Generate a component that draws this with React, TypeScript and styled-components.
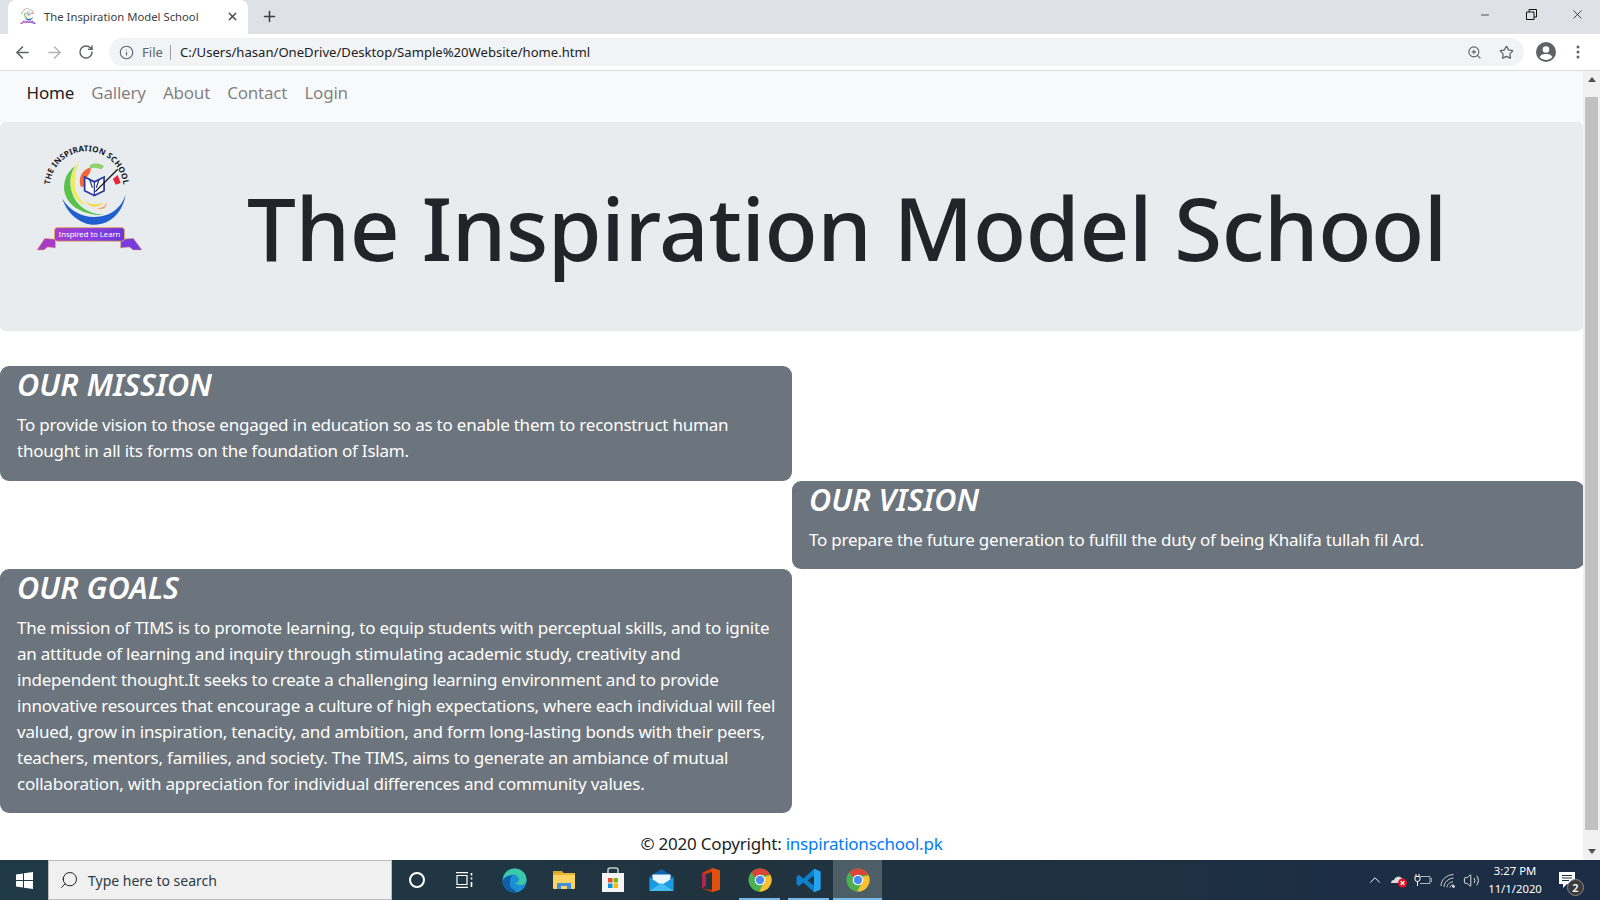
import React from 'react';
import styled, { createGlobalStyle } from 'styled-components';
import { ArrowLeft, ArrowRight, RotateCw, Star, ZoomIn, Info, Plus, X, Minus, Search, ChevronUp, Volume2 } from 'lucide-react';

const GlobalStyle = createGlobalStyle`
  html, body {
    margin: 0;
    height: 100%;
    overflow: hidden;
    background: #fff;
  }
  * { box-sizing: border-box; }
`;

const Screen = styled.div`
  width: 1600px;
  height: 900px;
  display: flex;
  flex-direction: column;
  overflow: hidden;
  font-family: "Noto Sans", "Open Sans", sans-serif;
  color: #212529;
`;

/* browser chrome */
const TabStrip = styled.div`
  height: 34px;
  background: #dee1e6;
  display: flex;
  align-items: flex-end;
  padding-left: 8px;
  flex: none;
`;

const Tab = styled.div`
  width: 240px;
  height: 34px;
  background: #fff;
  border-radius: 8px 8px 0 0;
  display: flex;
  align-items: center;
  padding: 0 9px 2px 12px;
  font-size: 11.3px;
  color: #3c4043;
`;

const TabTitle = styled.span`
  flex: 1;
  margin-left: 8px;
  white-space: nowrap;
`;

const NewTab = styled.div`
  width: 34px;
  height: 34px;
  margin-left: 4px;
  padding-bottom: 2px;
  display: flex;
  align-items: center;
  justify-content: center;
  color: #3c4043;
`;

const WindowControls = styled.div`
  margin-left: auto;
  display: flex;
  height: 34px;
  align-items: flex-start;
  color: #111;
`;

const WindowButton = styled.div`
  width: 46px;
  height: 29px;
  display: flex;
  align-items: center;
  justify-content: center;
`;

const Toolbar = styled.div`
  height: 37px;
  background: #fff;
  border-bottom: 1px solid #dadce0;
  display: flex;
  align-items: center;
  padding-left: 6px;
  flex: none;
`;

const NavIcon = styled.div<{ $dim?: boolean }>`
  width: 32px;
  height: 28px;
  display: flex;
  align-items: center;
  justify-content: center;
  color: ${p => (p.$dim ? '#b4b6b9' : '#5f6368')};
`;

const Omnibox = styled.div`
  width: 1415px;
  height: 28px;
  margin-left: 7px;
  border-radius: 14px;
  background: #f1f3f4;
  display: flex;
  align-items: center;
  padding: 0 2px 0 10px;
  font-size: 13.1px;
  color: #202124;
`;

const FileChip = styled.span`
  color: #5f6368;
  margin-left: 8px;
  padding-right: 7px;
  border-right: 1px solid #9aa0a6;
  line-height: 15px;
`;

const UrlText = styled.span`
  margin-left: 9px;
  flex: 1;
  white-space: nowrap;
`;

const OmniIcon = styled.div`
  width: 32px;
  display: flex;
  justify-content: center;
  color: #5f6368;
`;

const ToolRight = styled.div`
  display: flex;
  align-items: center;
  margin-left: 6px;
  color: #5f6368;
`;

const ToolIconSlot = styled.div<{ $w: number }>`
  width: ${p => p.$w}px;
  display: flex;
  justify-content: center;
`;

/* page */
const Viewport = styled.div`
  flex: 1;
  min-height: 0;
  display: flex;
`;

const Page = styled.div`
  flex: 1;
  min-width: 0;
  overflow: hidden;
  font-size: 17px;
  letter-spacing: -0.22px;
  line-height: 26px;
`;

const Navbar = styled.nav`
  height: 51px;
  background: #f8f9fa;
  display: flex;
  align-items: center;
  padding: 0 0 7px 18px;
`;

const NavLink = styled.a<{ $active?: boolean }>`
  padding: 0 8.6px;
  color: ${p => (p.$active ? 'rgba(0,0,0,.9)' : 'rgba(0,0,0,.5)')};
  text-decoration: none;
`;

const Jumbotron = styled.header`
  height: 209px;
  background: #e9ecef;
  border-radius: 5px;
  display: flex;
  align-items: flex-start;
  padding: 21px 0 0 36px;
`;

const Title = styled.h1`
  margin: 27px 0 0 104px;
  font-size: 87px;
  letter-spacing: -0.4px;
  line-height: 115px;
  font-weight: 500;
  white-space: nowrap;
`;

const CardGrid = styled.main`
  margin-top: 35px;
  display: grid;
  grid-template-columns: 792px 792px;
  grid-template-rows: 115px 88px auto;
`;

const Card = styled.section<{ $col: number; $row: number }>`
  grid-column: ${p => p.$col};
  grid-row: ${p => p.$row};
  background: #6c757d;
  color: #fff;
  border-radius: 9px;
  padding: 0 12px 16px 17px;
`;

const CardTitle = styled.h2`
  margin: -1px 0 9px;
  font-size: 30.6px;
  letter-spacing: 0;
  line-height: 38px;
  font-weight: 600;
  font-style: italic;
`;

const CardText = styled.p`
  margin: 0;
`;

const Footer = styled.footer`
  margin-top: 18px;
  text-align: center;
`;

const FooterLink = styled.a`
  color: #007bff;
  text-decoration: none;
`;

const ScrollBar = styled.div`
  width: 17px;
  flex: none;
  background: #f1f1f1;
  display: flex;
  flex-direction: column;
  align-items: center;
  justify-content: space-between;
`;

const ScrollArrow = styled.div<{ $down?: boolean }>`
  margin: 6px 0;
  width: 0;
  height: 0;
  border-left: 4px solid transparent;
  border-right: 4px solid transparent;
  ${p => (p.$down ? 'border-top: 5px solid #505050;' : 'border-bottom: 5px solid #505050;')}
`;

const ScrollThumb = styled.div`
  width: 13px;
  flex: 1;
  margin: 9px 0 13px;
  background: #c1c1c1;
`;

/* taskbar */
const Taskbar = styled.div`
  height: 40px;
  flex: none;
  background: linear-gradient(90deg, #1f3a46 0%, #20333f 50%, #1b2c45 100%);
  display: flex;
  align-items: stretch;
  color: #fff;
`;

const StartButton = styled.div`
  width: 48px;
  display: flex;
  align-items: center;
  justify-content: center;
`;

const SearchBox = styled.div`
  width: 344px;
  background: #f0f0f0;
  border: 1px solid #bcbcbc;
  display: flex;
  align-items: center;
  padding-left: 10px;
  color: #2b3a45;
  font-size: 14px;
`;

const SearchLabel = styled.span`
  margin-left: 9px;
`;

const TaskSlot = styled.div<{ $active?: boolean; $open?: boolean; $w?: number }>`
  width: ${p => p.$w ?? 49}px;
  display: flex;
  align-items: center;
  justify-content: center;
  position: relative;
  background: ${p => (p.$active ? '#4e5e67' : 'transparent')};

  ${p =>
    p.$open &&
    `&::after {
      content: '';
      position: absolute;
      left: ${p.$active ? 0 : 4}px;
      right: ${p.$active ? 0 : 4}px;
      bottom: 0;
      height: 2px;
      background: #76b9ed;
    }`}
`;

const AppGroup = styled.div`
  display: flex;
  margin-left: 3px;
`;

const Tray = styled.div`
  margin-left: auto;
  display: flex;
  align-items: center;
  height: 100%;
`;

const TrayIcon = styled.div<{ $w: number }>`
  width: ${p => p.$w}px;
  display: flex;
  align-items: center;
  justify-content: center;
`;

const Clock = styled.div`
  width: 62px;
  margin: 0 4px 0 1px;
  text-align: center;
  font-size: 11.3px;
  line-height: 18px;
  white-space: nowrap;
`;

const NoticeSlot = styled.div`
  width: 50px;
  height: 100%;
  padding-right: 16px;
  display: flex;
  align-items: center;
  justify-content: center;
  position: relative;
`;

const NoticeBadge = styled.span`
  position: absolute;
  left: 17px;
  top: 19px;
  width: 17px;
  height: 17px;
  border-radius: 50%;
  background: #3a3a3a;
  border: 1px solid #8a8a8a;
  font-size: 11px;
  line-height: 15px;
  text-align: center;
  font-weight: 600;
`;

const ChromeLogo = () => (
  <svg width="24" height="24" viewBox="0 0 24 24">
    <circle cx="12" cy="12" r="11.5" fill="#4caf50" />
    <path d="M12 .5A11.500 11.500 0 0 1 22.400 7H12a5 5 0 0 0-4.600 3L3.600 4.200A11.500 11.500 0 0 1 12 .5z" fill="#db4437" />
    <path d="M22.400 7A11.500 11.500 0 0 1 11 23.500l5.200-8.900A5 5 0 0 0 15.800 9z" fill="#fbc02d" />
    <circle cx="12" cy="12" r="5.300" fill="#fff" />
    <circle cx="12" cy="12" r="4.200" fill="#4a8af4" />
  </svg>
);

const EdgeLogo = () => (
  <svg width="25" height="25" viewBox="0 0 25 25">
    <circle cx="12.5" cy="12.5" r="12" fill="#1b8fd6" />
    <path d="M1 11C2 4.500 7 .5 12.500.5 19 .5 24.500 5 24.500 12c0 3-2.500 5-6 5-3 0-5-1-5-2.500 3 0 4-1.500 3.500-3.500C16 7.500 13 6 10 6.500 6 7 2.500 9 1 11z" fill="#3ac8a8" />
    <path d="M8 14c-1 4 2 8 7 8.800-1 .7-2 1-3 1.100C6 24.500 1 20 .7 13 3 9 7 7 10.500 7.500 8.500 9 8 11.500 8 14z" fill="#0f5fa8" />
  </svg>
);

const FolderLogo = () => (
  <svg width="24" height="20" viewBox="0 0 24 20">
    <path d="M1 1h9l2 2.500H1z" fill="#d9a520" />
    <rect x="1" y="3" width="22" height="16" rx="1" fill="#fcd462" />
    <rect x="1" y="3" width="22" height="2" fill="#e8b53a" />
    <path d="M5 19v-6h14v6h-4v-3H9v3z" fill="#3f8fdc" />
  </svg>
);

const StoreLogo = () => (
  <svg width="24" height="26" viewBox="0 0 24 26">
    <path d="M7 7V3a2 2 0 0 1 2-2h6a2 2 0 0 1 2 2v4" fill="none" stroke="#c9c9c9" strokeWidth="1.6" />
    <rect x="1" y="6" width="22" height="19" fill="#f3f3f3" />
    <rect x="7" y="11" width="4.500" height="4.500" fill="#e5502c" />
    <rect x="12.500" y="11" width="4.500" height="4.500" fill="#7fb800" />
    <rect x="7" y="16.500" width="4.500" height="4.500" fill="#0a94e0" />
    <rect x="12.500" y="16.500" width="4.500" height="4.500" fill="#fdb900" />
  </svg>
);

const MailLogo = () => (
  <svg width="25" height="24" viewBox="0 0 25 24">
    <path d="M.5 8.500 12.500 1l12 7.500V23H.5z" fill="#0a63ad" />
    <path d="M3.500 6.500h18v7l-9 5-9-5z" fill="#eaf5fc" />
    <path d="M.5 9.500 12.500 17l12-7.500V23H.5z" fill="#1c9be3" />
    <path d="M.5 23 12.500 15l12 8z" fill="#45bdf2" />
  </svg>
);

const OfficeLogo = () => (
  <svg width="20" height="24" viewBox="0 0 20 24">
    <path d="M11 0l8 2.500v19L11 24 1 20.500l10 1.500V4L5 6v11L1 20.500V5z" fill="#d83b01" />
    <path d="M1 5l4 1v11l-4 3.500z" fill="#b3264b" />
    <path d="M11 0l8 2.500v19L11 24z" fill="#e2500f" />
  </svg>
);

const VsCodeLogo = () => (
  <svg width="25" height="25" viewBox="0 0 25 25">
    <path d="M18 .7 24.500 3.500v18L18 24.300 7.500 14.500 3 18 .5 16.500v-8L3 7l4.500 3.500z" fill="#0e7fcb" />
    <path d="M18 .7 24.500 3.500v18L18 24.300z" fill="#27a4ef" />
    <path d="M18 7.500v10l-6.500-5z" fill="#1f3540" />
  </svg>
);

const WindowsLogo = () => (
  <svg width="17" height="17" viewBox="0 0 17 17">
    <path d="M0 2.400 7 1.400V8H0zM8 1.300 17 0v8H8zM0 9h7v6.600l-7-1zM8 9h9v8l-9-1.300z" fill="#fff" />
  </svg>
);

const TaskViewIcon = () => (
  <svg width="18" height="16" viewBox="0 0 18 16" fill="none" stroke="#fff" strokeWidth="1.200">
    <path d="M1 .7h12M1 15.300h12M2 3.500h10v9H2z" />
    <path d="M16.500 1v2.500M16.500 5.500v2M16.500 10v5" strokeWidth="1.600" />
  </svg>
);

const CortanaIcon = () => (
  <svg width="18" height="18" viewBox="0 0 18 18">
    <circle cx="9" cy="9" r="7" fill="none" stroke="#fff" strokeWidth="2" />
  </svg>
);

const CloudOffIcon = () => (
  <svg width="18" height="17" viewBox="0 0 18 17">
    <path d="M1 11a3 3 0 0 1 3-3 4.500 4.500 0 0 1 8-1.500A3.500 3.500 0 0 1 15 11z" fill="#d9dde0" />
    <circle cx="12.500" cy="11" r="4.500" fill="#e81123" />
    <path d="M10.700 9.200l3.600 3.600M14.300 9.200l-3.600 3.600" stroke="#fff" strokeWidth="1.300" />
  </svg>
);

const BatteryPlugIcon = () => (
  <svg width="18" height="14" viewBox="0 0 18 14" fill="none" stroke="#fff" strokeWidth="1">
    <path d="M2 1v2.500M5 1v2.500M1 3.500h5v2.500a2.500 2.500 0 0 1-5 0zM3.500 8.500v4.500" />
    <path d="M6.500 3.500H16v7H6M16.500 5.500h1.200v3h-1.200" stroke="#aeb4b8" />
  </svg>
);

const WifiIcon = () => (
  <svg width="16" height="15" viewBox="0 0 16 15" fill="none" stroke="#cfd3d6" strokeWidth="1">
    <path d="M1 13C1 7 6 2 13.500 1.500M4 14c0-4.500 4-8.500 9.500-9M7 14.300c0-2.500 2.500-5.300 6-5.500M10 14.500c0-1.300 1.500-2.700 3.500-2.700" />
    <circle cx="13.500" cy="13.500" r="1.300" fill="#fff" stroke="none" />
  </svg>
);

const NoticeIcon = () => (
  <svg width="17" height="18" viewBox="0 0 17 18">
    <path d="M0 1h16v12H8l-4 4v-4H0z" fill="#fff" />
    <path d="M3 4.500h10M3 7h10M3 9.500h7" stroke="#1b2c45" />
  </svg>
);

const RestoreIcon = () => (
  <svg width="11" height="11" viewBox="0 0 11 11" fill="none" stroke="#111">
    <path d="M.5 3h7.500v7.500H.5zM3 3V.5h7.500V8H8" />
  </svg>
);

const ProfileIcon = () => (
  <svg width="20" height="20" viewBox="0 0 20 20">
    <circle cx="10" cy="10" r="10" fill="#5f6368" />
    <circle cx="10" cy="7.500" r="3.300" fill="#fff" />
    <path d="M3.500 15c1.500-2.500 4-3 6.500-3s5 .5 6.500 3A8 8 0 0 1 10 18a8 8 0 0 1-6.500-3z" fill="#fff" />
  </svg>
);

const MoreIcon = () => (
  <svg width="4" height="14" viewBox="0 0 4 14" fill="#5f6368">
    <circle cx="2" cy="2" r="1.500" />
    <circle cx="2" cy="7" r="1.500" />
    <circle cx="2" cy="12" r="1.500" />
  </svg>
);

const SchoolLogo: React.FC<{ size: number }> = ({ size }) => (
  <svg width={size} height={(size * 116) / 110} viewBox="0 0 110 116" overflow="visible">
    <defs>
      <path id="logoArc" d="M16.500 60A38 38 0 1 1 87.500 60" />
      <linearGradient id="ribbon" x1="0" x2="1" y1="0" y2="0">
        <stop offset="0" stopColor="#a83cc9" />
        <stop offset="0.5" stopColor="#8a3fe0" />
        <stop offset="1" stopColor="#6d35d8" />
      </linearGradient>
    </defs>
    <text fontFamily="'Noto Sans', sans-serif" fontSize="8.200" fontWeight="700" fill="#15151f" textAnchor="middle" letterSpacing="0.2">
      <textPath href="#logoArc" startOffset="50%">THE INSPIRATION SCHOOL</textPath>
    </text>
    <g transform="translate(6 1)">
      <path d="M21 56C26 72 40 83 54 83 72 83 84 68 86 52 82 66 70 75 54 75 40 75 28 68 21 56z" fill="#1f5fd0" />
      <path d="M34 23C24 30 21 42 24 52 29 66 46 74 64 73 48 72 35 64 31 50 28 40 29 32 34 23z" fill="#58c24a" />
      <path d="M39 17C31 26 28 38 31 48 33 55 39 61 46 64 38 57 34 49 34 41 34 32 35 25 39 17z" fill="#f1ea5a" />
      <path d="M40 44C37 35 41 27 50 24 51 28 49 31 47 33 45 37 46 41 46 44z" fill="#f4673c" />
      <path d="M49 22C55 19 60 20 64 23L61 26C57 24 53 24 50 25z" fill="#8fd16a" />
      <path d="M44 58C50 63 58 63 63 60 59 66 50 67 44 58z" fill="#f4d94f" />
      <path d="M57 66C62 66 65 64 67 60 67 65 62 69 57 66z" fill="#f6a75a" />
      <path d="M44 34l10 5 10-5v14l-10 5-10-5z" fill="#fff" stroke="#2d3b9c" strokeWidth="1.800" />
      <path d="M54 39v14M49 36l3 9M59 36l-3 9" stroke="#2d3b9c" strokeWidth="1.300" fill="none" />
      <path d="M55 49 78 26" stroke="#15151f" strokeWidth="1.400" />
      <path d="M73 36l5-4 3 8-5 2z" fill="#e8243c" />
    </g>
    <path d="M1 110 9 98l11 1v9l-8-1-4 3z" fill="#a83cc9" stroke="#e6b64c" strokeWidth="0.500" />
    <path d="M109 110 100 98l-13 1v9l9-1 4 3z" fill="#7a3ae0" stroke="#e6b64c" strokeWidth="0.500" />
    <rect x="19" y="87" width="72" height="14" rx="3" fill="url(#ribbon)" stroke="#e6b64c" strokeWidth="0.800" />
    <text x="55" y="97" textAnchor="middle" fontFamily="'Noto Sans', sans-serif" fontSize="7.900" letterSpacing="0" fill="#fff">
      Inspired to Learn
    </text>
  </svg>
);

const goalsText =
  'The mission of TIMS is to promote learning, to equip students with perceptual skills, and to ignite an attitude of learning and inquiry through stimulating academic study, creativity and independent thought.It seeks to create a challenging learning environment and to provide innovative resources that encourage a culture of high expectations, where each individual will feel valued, grow in inspiration, tenacity, and ambition, and form long-lasting bonds with their peers, teachers, mentors, families, and society. The TIMS, aims to generate an ambiance of mutual collaboration, with appreciation for individual differences and community values.';

export default function App() {
  return (
    <Screen>
      <GlobalStyle />
      <TabStrip>
        <Tab>
          <SchoolLogo size={16} />
          <TabTitle>The Inspiration Model School</TabTitle>
          <X size={13} strokeWidth={2.5} color="#45484c" />
        </Tab>
        <NewTab>
          <Plus size={17} strokeWidth={2.2} />
        </NewTab>
        <WindowControls>
          <WindowButton><Minus size={12} strokeWidth={1.4} /></WindowButton>
          <WindowButton><RestoreIcon /></WindowButton>
          <WindowButton><X size={15} strokeWidth={1.2} /></WindowButton>
        </WindowControls>
      </TabStrip>

      <Toolbar>
        <NavIcon><ArrowLeft size={19} strokeWidth={2} /></NavIcon>
        <NavIcon $dim><ArrowRight size={19} strokeWidth={2} /></NavIcon>
        <NavIcon><RotateCw size={16} strokeWidth={2.2} /></NavIcon>
        <Omnibox>
          <Info size={15} strokeWidth={1.8} color="#5f6368" />
          <FileChip>File</FileChip>
          <UrlText>C:/Users/hasan/OneDrive/Desktop/Sample%20Website/home.html</UrlText>
          <OmniIcon><ZoomIn size={15} strokeWidth={1.7} /></OmniIcon>
          <OmniIcon><Star size={15} strokeWidth={2} /></OmniIcon>
        </Omnibox>
        <ToolRight>
          <ToolIconSlot $w={32}><ProfileIcon /></ToolIconSlot>
          <ToolIconSlot $w={32}><MoreIcon /></ToolIconSlot>
        </ToolRight>
      </Toolbar>

      <Viewport>
        <Page>
          <Navbar>
            <NavLink $active>Home</NavLink>
            <NavLink>Gallery</NavLink>
            <NavLink>About</NavLink>
            <NavLink>Contact</NavLink>
            <NavLink>Login</NavLink>
          </Navbar>
          <Jumbotron>
            <SchoolLogo size={107} />
            <Title>The Inspiration Model School</Title>
          </Jumbotron>
          <CardGrid>
            <Card $col={1} $row={1}>
              <CardTitle>OUR MISSION</CardTitle>
              <CardText>
                To provide vision to those engaged in education so as to enable them to reconstruct human thought in all its forms on the foundation of Islam.
              </CardText>
            </Card>
            <Card $col={2} $row={2}>
              <CardTitle>OUR VISION</CardTitle>
              <CardText>To prepare the future generation to fulfill the duty of being Khalifa tullah fil Ard.</CardText>
            </Card>
            <Card $col={1} $row={3}>
              <CardTitle>OUR GOALS</CardTitle>
              <CardText>{goalsText}</CardText>
            </Card>
          </CardGrid>
          <Footer>
            © 2020 Copyright: <FooterLink>inspirationschool.pk</FooterLink>
          </Footer>
        </Page>
        <ScrollBar>
          <ScrollArrow />
          <ScrollThumb />
          <ScrollArrow $down />
        </ScrollBar>
      </Viewport>

      <Taskbar>
        <StartButton><WindowsLogo /></StartButton>
        <SearchBox>
          <Search size={20} strokeWidth={1.2} color="#222" style={{ transform: 'scaleX(-1)' }} />
          <SearchLabel>Type here to search</SearchLabel>
        </SearchBox>
        <TaskSlot><CortanaIcon /></TaskSlot>
        <TaskSlot $w={46}><TaskViewIcon /></TaskSlot>
        <AppGroup>
          <TaskSlot><EdgeLogo /></TaskSlot>
          <TaskSlot><FolderLogo /></TaskSlot>
          <TaskSlot><StoreLogo /></TaskSlot>
          <TaskSlot><MailLogo /></TaskSlot>
          <TaskSlot><OfficeLogo /></TaskSlot>
          <TaskSlot $open><ChromeLogo /></TaskSlot>
          <TaskSlot $open><VsCodeLogo /></TaskSlot>
          <TaskSlot $open $active><ChromeLogo /></TaskSlot>
        </AppGroup>
        <Tray>
          <TrayIcon $w={28}><ChevronUp size={18} strokeWidth={1.3} /></TrayIcon>
          <TrayIcon $w={20}><CloudOffIcon /></TrayIcon>
          <TrayIcon $w={28}><BatteryPlugIcon /></TrayIcon>
          <TrayIcon $w={22}><WifiIcon /></TrayIcon>
          <TrayIcon $w={24}><Volume2 size={17} strokeWidth={1.2} /></TrayIcon>
          <Clock>3:27 PM<br />11/1/2020</Clock>
          <NoticeSlot>
            <NoticeIcon />
            <NoticeBadge>2</NoticeBadge>
          </NoticeSlot>
        </Tray>
      </Taskbar>
    </Screen>
  );
}
